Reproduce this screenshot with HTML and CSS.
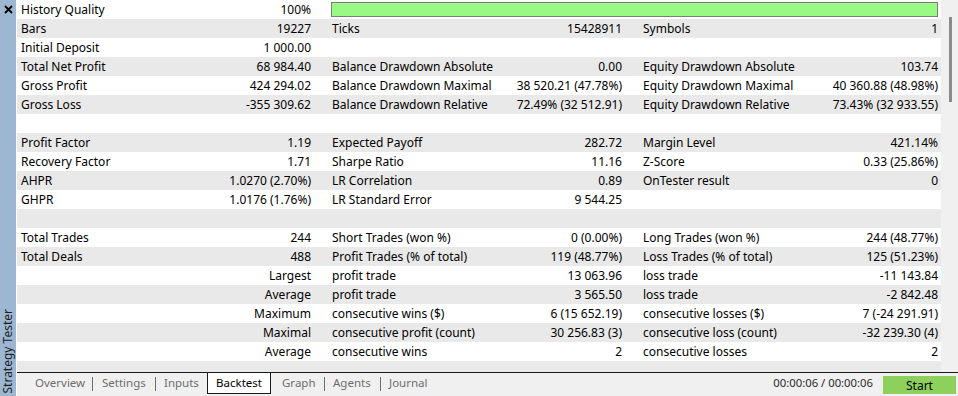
FILE: index.html
```html
<!DOCTYPE html>
<html>
<head>
<meta charset="utf-8">
<link rel="stylesheet" href="styles.css">
</head>
<body>
<div class="app">
  <div class="sidebar">
    <svg class="close" width="9" height="9" viewBox="0 0 9 9"><path d="M1 1L8 8M8 1L1 8" stroke="#000" stroke-width="1.8"/></svg>
    <div class="side-title">Strategy Tester</div>
  </div>
  <div class="main">
    <div class="top">
      <div class="table">
        <div class="row">
          <div class="cell"><span>History Quality</span><span>100%</span></div>
          <div class="quality"><div class="quality-bar"></div></div>
        </div>
        <div class="row">
          <div class="cell"><span>Bars</span><span>19227</span></div>
          <div class="cell"><span>Ticks</span><span>15428911</span></div>
          <div class="cell"><span>Symbols</span><span>1</span></div>
        </div>
        <div class="row">
          <div class="cell"><span>Initial Deposit</span><span>1 000.00</span></div>
          <div class="cell"></div>
          <div class="cell"></div>
        </div>
        <div class="row">
          <div class="cell"><span>Total Net Profit</span><span>68 984.40</span></div>
          <div class="cell"><span>Balance Drawdown Absolute</span><span>0.00</span></div>
          <div class="cell"><span>Equity Drawdown Absolute</span><span>103.74</span></div>
        </div>
        <div class="row">
          <div class="cell"><span>Gross Profit</span><span>424 294.02</span></div>
          <div class="cell"><span>Balance Drawdown Maximal</span><span>38 520.21 (47.78%)</span></div>
          <div class="cell"><span>Equity Drawdown Maximal</span><span>40 360.88 (48.98%)</span></div>
        </div>
        <div class="row">
          <div class="cell"><span>Gross Loss</span><span>-355 309.62</span></div>
          <div class="cell"><span>Balance Drawdown Relative</span><span>72.49% (32 512.91)</span></div>
          <div class="cell"><span>Equity Drawdown Relative</span><span>73.43% (32 933.55)</span></div>
        </div>
        <div class="row"></div>
        <div class="row">
          <div class="cell"><span>Profit Factor</span><span>1.19</span></div>
          <div class="cell"><span>Expected Payoff</span><span>282.72</span></div>
          <div class="cell"><span>Margin Level</span><span>421.14%</span></div>
        </div>
        <div class="row">
          <div class="cell"><span>Recovery Factor</span><span>1.71</span></div>
          <div class="cell"><span>Sharpe Ratio</span><span>11.16</span></div>
          <div class="cell"><span>Z-Score</span><span>0.33 (25.86%)</span></div>
        </div>
        <div class="row">
          <div class="cell"><span>AHPR</span><span>1.0270 (2.70%)</span></div>
          <div class="cell"><span>LR Correlation</span><span>0.89</span></div>
          <div class="cell"><span>OnTester result</span><span>0</span></div>
        </div>
        <div class="row">
          <div class="cell"><span>GHPR</span><span>1.0176 (1.76%)</span></div>
          <div class="cell"><span>LR Standard Error</span><span>9 544.25</span></div>
          <div class="cell"></div>
        </div>
        <div class="row"></div>
        <div class="row">
          <div class="cell"><span>Total Trades</span><span>244</span></div>
          <div class="cell"><span>Short Trades (won %)</span><span>0 (0.00%)</span></div>
          <div class="cell"><span>Long Trades (won %)</span><span>244 (48.77%)</span></div>
        </div>
        <div class="row">
          <div class="cell"><span>Total Deals</span><span>488</span></div>
          <div class="cell"><span>Profit Trades (% of total)</span><span>119 (48.77%)</span></div>
          <div class="cell"><span>Loss Trades (% of total)</span><span>125 (51.23%)</span></div>
        </div>
        <div class="row">
          <div class="cell"><span></span><span>Largest</span></div>
          <div class="cell"><span>profit trade</span><span>13 063.96</span></div>
          <div class="cell"><span>loss trade</span><span>-11 143.84</span></div>
        </div>
        <div class="row">
          <div class="cell"><span></span><span>Average</span></div>
          <div class="cell"><span>profit trade</span><span>3 565.50</span></div>
          <div class="cell"><span>loss trade</span><span>-2 842.48</span></div>
        </div>
        <div class="row">
          <div class="cell"><span></span><span>Maximum</span></div>
          <div class="cell"><span>consecutive wins ($)</span><span>6 (15 652.19)</span></div>
          <div class="cell"><span>consecutive losses ($)</span><span>7 (-24 291.91)</span></div>
        </div>
        <div class="row">
          <div class="cell"><span></span><span>Maximal</span></div>
          <div class="cell"><span>consecutive profit (count)</span><span>30 256.83 (3)</span></div>
          <div class="cell"><span>consecutive loss (count)</span><span>-32 239.30 (4)</span></div>
        </div>
        <div class="row">
          <div class="cell"><span></span><span>Average</span></div>
          <div class="cell"><span>consecutive wins</span><span>2</span></div>
          <div class="cell"><span>consecutive losses</span><span>2</span></div>
        </div>
        <div class="row"></div>
      </div>
      <div class="scroll"><div class="thumb"></div></div>
    </div>
    <div class="tabbar">
      <div class="tabs">
        <span class="tab tab-overview">Overview</span><span class="sep"></span>
        <span class="tab tab-settings">Settings</span><span class="sep"></span>
        <span class="tab tab-inputs">Inputs</span>
        <span class="tab active">Backtest</span>
        <span class="tab tab-graph">Graph</span><span class="sep"></span>
        <span class="tab tab-agents">Agents</span><span class="sep"></span>
        <span class="tab tab-journal">Journal</span>
      </div>
      <div class="status">
        <span class="time">00:00:06 / 00:00:06</span>
        <button class="start">Start</button>
      </div>
    </div>
  </div>
</div>
</body>
</html>
```

FILE: styles.css
```css
* { box-sizing: border-box; }
html, body { margin: 0; padding: 0; }
body {
  width: 958px;
  height: 396px;
  overflow: hidden;
  background: #fff;
  font-family: "Noto Sans", "Open Sans", sans-serif;
  font-size: 12px;
  color: #000;
}
.app {
  display: flex;
  width: 958px;
  height: 396px;
}
.sidebar {
  width: 16px;
  flex: none;
  background: #9db7d3;
  position: relative;
}
.close {
  position: absolute;
  left: 4px;
  top: 5px;
}
.side-title {
  position: absolute;
  left: 0;
  bottom: 3px;
  width: 16px;
  writing-mode: vertical-rl;
  transform: rotate(180deg);
  line-height: 16px;
  color: #1e1e1e;
  white-space: nowrap;
}
.main {
  flex: 1;
  display: flex;
  flex-direction: column;
  margin-left: 1px;
}
.top {
  height: 372px;
  display: flex;
  overflow: hidden;
}
.table {
  width: 924px;
  flex: none;
}
.row {
  display: grid;
  grid-template-columns: 290px 290px 295px;
  column-gap: 21px;
  padding-left: 4px;
  height: 19px;
  line-height: 19px;
}
.row:nth-child(even) { background: #e9e9e9; }
.cell {
  display: flex;
  justify-content: space-between;
  white-space: nowrap;
}
.quality {
  grid-column: 2 / 4;
  margin-left: -1px;
  padding-top: 2px;
}
.quality-bar {
  height: 15px;
  border: 1px solid #7c7c7c;
  background: #98f984;
}
.scroll {
  flex: 1;
  background: #f0f0f0;
  position: relative;
}
.thumb {
  position: absolute;
  left: 8px;
  top: 17px;
  width: 3px;
  height: 85px;
  background: #8a8a8a;
}
.tabbar {
  flex: 1;
  border-top: 1px solid #1a1a1a;
  background: #f0f0f0;
  display: flex;
  justify-content: space-between;
}
.tabs {
  display: flex;
  align-items: flex-start;
}
.tab {
  color: #6e6e6e;
  font-size: 11.5px;
  line-height: 20px;
  white-space: nowrap;
  overflow: hidden;
}
.tab-overview { margin-left: 18px; width: 57px; }
.tab-settings { padding-left: 9px; width: 62px; }
.tab-inputs { padding-left: 8px; width: 51px; }
.tab-graph { padding-left: 11px; width: 53px; }
.tab-agents { padding-left: 8px; width: 55px; }
.tab-journal { padding-left: 8px; width: 60px; }
.sep {
  width: 1px;
  height: 14px;
  background: #6e6e6e;
  margin-top: 4px;
}
.tab.active {
  color: #000;
  background: #fff;
  border: 1px solid #1a1a1a;
  border-top: none;
  width: 64px;
  text-align: center;
  height: 21px;
}
.status {
  display: flex;
  align-items: flex-start;
}
.time {
  line-height: 20px;
  color: #2a2a2a;
  margin-right: 10px;
  font-size: 11.3px;
}
.start {
  font-family: inherit;
  font-size: 12px;
  color: #000;
  background: #8dd05c;
  border: none;
  width: 73px;
  height: 18px;
  margin: 3px 2px 0 0;
  padding: 0;
}
```
